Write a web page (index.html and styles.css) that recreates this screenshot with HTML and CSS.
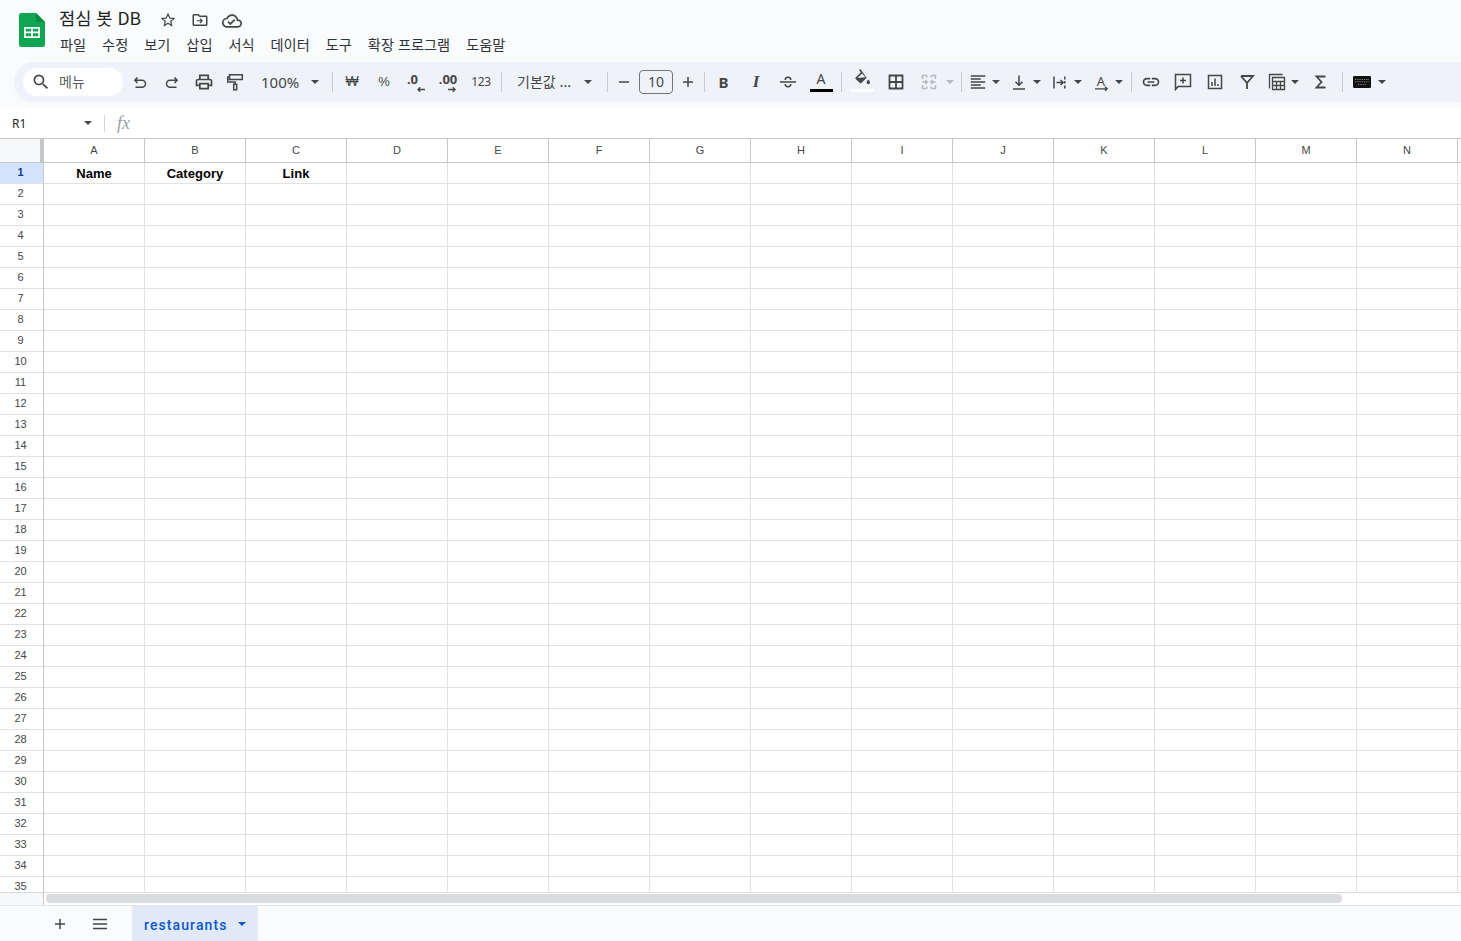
FILE: index.html
```html
<!DOCTYPE html>
<html lang="ko">
<head>
<meta charset="utf-8">
<title>점심 봇 DB</title>
<link rel="stylesheet" href="styles.css">
</head>
<body>
<div class="app">
  <header class="header">
    <div class="top">
      <svg class="logo" viewBox="0 0 26 34"><path fill="#0fa653" d="M2.5 0H17l9 9v22.5a2.5 2.5 0 0 1-2.5 2.5h-21A2.5 2.5 0 0 1 0 31.500V2.500A2.500 2.500 0 0 1 2.500 0z"/><path fill="#0a8a43" d="M17 0l9 9h-9z"/><path fill="#fff" d="M5 14h16v11H5zm1.800 1.800v2.800h5.300v-2.800zm7.100 0v2.800h5.300v-2.800zm-7.100 4.500v2.900h5.300v-2.900zm7.100 0v2.900h5.300v-2.900z" fill-rule="evenodd"/></svg>
      <div class="titles">
        <div class="title-row">
          <span class="doc-title">점심 봇 DB</span>
          <span class="title-icons">
            <span class="ti"><svg viewBox="0 0 24 24" class="i18"><path d="M22 9.240l-7.190-.620L12 2 9.190 8.630 2 9.240l5.460 4.730L5.820 21 12 17.270 18.180 21l-1.630-7.030L22 9.240zM12 15.400l-3.760 2.270 1-4.280-3.320-2.880 4.380-.380L12 6.100l1.710 4.040 4.380.380-3.320 2.880 1 4.280L12 15.400z"/></svg></span>
            <span class="ti"><svg viewBox="0 0 24 24" class="i18"><path d="M20 6h-8l-2-2H4c-1.100 0-2 .9-2 2v12c0 1.100.9 2 2 2h16c1.100 0 2-.9 2-2V8c0-1.100-.9-2-2-2zm0 12H4V6h5.170l2 2H20v10z"/><path d="M12.500 9.500l-1.100 1.100 1.600 1.600H7.500v1.600H13l-1.600 1.600 1.100 1.100 3.500-3.500z"/></svg></span>
            <span class="ti"><svg viewBox="0 0 24 24" class="i20"><path d="M19.350 10.040C18.670 6.590 15.640 4 12 4 9.110 4 6.600 5.640 5.350 8.040 2.340 8.360 0 10.910 0 14c0 3.310 2.690 6 6 6h13c2.760 0 5-2.240 5-5 0-2.640-2.050-4.780-4.650-4.960zM19 18H6c-2.210 0-4-1.790-4-4 0-2.050 1.530-3.760 3.560-3.970l1.070-.11.5-.95C8.080 7.140 9.940 6 12 6c2.620 0 4.880 1.860 5.390 4.430l.3 1.500 1.530.11c1.560.1 2.780 1.410 2.780 2.960 0 1.650-1.350 3-3 3zm-9-3.820l-2.090-2.090L6.500 13.500 10 17l6.010-6.010-1.410-1.410z"/></svg></span>
          </span>
        </div>
        <nav class="menu">
          <span>파일</span><span>수정</span><span>보기</span><span>삽입</span><span>서식</span><span>데이터</span><span>도구</span><span>확장 프로그램</span><span>도움말</span>
        </nav>
      </div>
    </div>
    <div class="toolbar">
      <div class="search"><svg viewBox="0 0 24 24" class="i20"><path d="M15.500 14h-.79l-.28-.27A6.471 6.471 0 0 0 16 9.500 6.500 6.500 0 1 0 9.500 16c1.610 0 3.090-.59 4.230-1.570l.27.28v.79l5 4.990L20.490 19l-4.990-5zm-6 0C7.010 14 5 11.990 5 9.500S7.010 5 9.500 5 14 7.010 14 9.500 11.990 14 9.500 14z"/></svg><span>메뉴</span></div>
      <span class="btn first"><svg viewBox="0 0 18 18" class="i18 st"><path d="M6.500 4.500L3.800 7.300l2.700 2.700M3.800 7.300h7.200a3.500 3.500 0 0 1 0 7H4.500"/></svg></span>
      <span class="btn"><svg viewBox="0 0 18 18" class="i18 st"><path d="M11.500 4.500l2.700 2.800-2.700 2.700M14.200 7.300H7a3.500 3.500 0 0 0 0 7h6.500"/></svg></span>
      <span class="btn"><svg viewBox="0 0 24 24" class="i20"><path d="M19 8h-1V3H6v5H5c-1.660 0-3 1.340-3 3v6h4v4h12v-4h4v-6c0-1.660-1.340-3-3-3zM8 5h8v3H8V5zm8 12v2H8v-4h8v2zm2-2v-2H6v2H4v-4c0-.55.45-1 1-1h14c.55 0 1 .45 1 1v4h-2z"/></svg></span>
      <span class="btn"><svg viewBox="0 0 18 18" class="i18 st"><path d="M2.500 1.800h12.800v4.700H2.500zM2.500 4H.8v5h7.400v2.300M6.700 11.300h3v5.500h-3z"/></svg></span>
      <span class="zoom"><span>100%</span><i class="caret"></i></span>
      <i class="sep"></i>
      <span class="btn txt won">₩</span>
      <span class="btn txt pct">%</span>
      <span class="btn dec dec-l"><b>.0</b><svg viewBox="0 0 8 5" class="dec-arrow"><path d="M8 2.500H1M3.300 .3L1 2.500l2.300 2.200"/></svg></span>
      <span class="btn dec dec-r"><b>.00</b><svg viewBox="0 0 8 5" class="dec-arrow"><path d="M0 2.500h7M4.700 .3L7 2.500 4.700 4.700"/></svg></span>
      <span class="btn txt num">123</span>
      <i class="sep"></i>
      <span class="font-sel"><span>기본값 ...</span><i class="caret"></i></span>
      <i class="sep"></i>
      <span class="step"><svg viewBox="0 0 12 12" class="i12 st"><path d="M1 6h10"/></svg></span>
      <span class="size"><span>10</span></span>
      <span class="step plus"><svg viewBox="0 0 12 12" class="i12 st"><path d="M1 6h10M6 1v10"/></svg></span>
      <i class="sep"></i>
      <span class="btn txt bold">B</span>
      <span class="btn txt ital">I</span>
      <span class="btn"><svg viewBox="0 0 18 18" class="i18 st"><path d="M1 9h16M6.200 7c0-1.600 1.100-2.700 2.800-2.700s2.800 1.100 2.800 2.700M6.200 11c0 1.600 1.100 2.700 2.800 2.700s2.800-1.100 2.800-2.700"/></svg></span>
      <span class="btn color"><span class="color-a">A</span><i class="bar black"></i></span>
      <i class="sep"></i>
      <span class="btn fill"><svg viewBox="0 0 18 18" class="i18 fillicon"><path d="M7.300 0L6 1.300l1.900 1.900L2.700 8.400a1.100 1.100 0 0 0 0 1.500l4.200 4.200a1.100 1.100 0 0 0 1.500 0l5.300-5.300zM4.500 9.100l4.500-4.500 3.600 3.600z"/><path d="M15.300 10.500s-1.700 1.900-1.700 3a1.700 1.700 0 0 0 3.400 0c0-1.100-1.700-3-1.700-3z"/></svg><i class="bar white"></i></span>
      <span class="btn gap2"><svg viewBox="0 0 18 18" class="i18 st heavy"><path d="M2.500 2.500h13v13h-13zM9 2.500v13M2.500 9h13"/></svg></span>
      <span class="merge"><svg viewBox="0 0 18 18" class="i18 st dis"><path d="M2.500 6V2.500h4M11.500 2.500h4V6M2.500 12v3.500h4M11.500 15.500h4V12M2.500 9H7M5.200 7L7.200 9l-2 2M15.500 9H11M12.800 7l-2 2 2 2M6.800 2.500v2M11.200 2.500v2M6.800 13.500v2M11.200 13.500v2"/></svg></span>
      <i class="caret dis-caret"></i>
      <i class="sep"></i>
      <span class="dd"><svg viewBox="0 0 18 18" class="i18 st"><path d="M1.800 3h14.400M1.800 6h10M1.800 9h14.400M1.800 12h10M1.800 15h14.400"/></svg><i class="caret"></i></span>
      <span class="dd"><svg viewBox="0 0 18 18" class="i18 st"><path d="M9 2.500v9.500M5.500 8.800L9 12.300l3.500-3.500M3 16h12"/></svg><i class="caret"></i></span>
      <span class="dd"><svg viewBox="0 0 18 18" class="i18 st"><path d="M3 3.500v12M13.800 3.500v3M13.800 8v2.500M13.800 12.500v3M5.500 9.500h6.500M9.500 7l2.700 2.500L9.500 12"/></svg><i class="caret"></i></span>
      <span class="dd last"><svg viewBox="0 0 18 18" class="i18 rot"><text x="9" y="13" class="rot-a">A</text><path class="rot-line" d="M3 15.800h12M13 13.800l2.200 2-2.200 2"/></svg><i class="caret"></i></span>
      <i class="sep"></i>
      <span class="btn"><svg viewBox="0 0 24 24" class="i20"><path d="M3.900 12c0-1.710 1.390-3.100 3.100-3.100h4V7H7c-2.760 0-5 2.240-5 5s2.240 5 5 5h4v-1.900H7c-1.710 0-3.100-1.390-3.100-3.100zM8 13h8v-2H8v2zm9-6h-4v1.900h4c1.710 0 3.100 1.390 3.100 3.100s-1.390 3.100-3.100 3.100h-4V17h4c2.760 0 5-2.240 5-5s-2.240-5-5-5z"/></svg></span>
      <span class="btn"><svg viewBox="0 0 18 18" class="i18 st"><path d="M1.500 1.500h15v12H4l-2.500 3zM9 4.500v6M6 7.500h6"/></svg></span>
      <span class="btn"><svg viewBox="0 0 18 18" class="i18 st"><path d="M2.500 2.500h13v13h-13zM6 13V9M9 13V5.500M12 13v-2"/></svg></span>
      <span class="btn"><svg viewBox="0 0 18 18" class="i18 st heavy"><path d="M3 3h12L9 10v6M9 10L3 3"/></svg></span>
      <span class="dd tbl"><svg viewBox="0 0 18 18" class="i18 st thin"><path d="M1.500 15.500V1.500h13M4.500 4.500h12v12h-12zM4.500 8.500h12M4.500 12.500h12M8.500 8.500v8M12.500 8.500v8"/></svg><i class="caret"></i></span>
      <span class="btn sig"><svg viewBox="0 0 18 18" class="i18 st heavy"><path d="M13.500 3.500h-9L9.500 9l-5 5.500h9"/></svg></span>
      <i class="sep"></i>
      <span class="dd kbd"><svg viewBox="0 0 18 12" class="kbd-ic"><path fill="#111" d="M0 1.200A1.200 1.200 0 0 1 1.200 0h15.600A1.200 1.200 0 0 1 18 1.200v9.600a1.200 1.200 0 0 1-1.200 1.200H1.200A1.200 1.200 0 0 1 0 10.800z"/><path stroke="#9aa0a6" stroke-width=".8" stroke-dasharray="1 .8" fill="none" d="M2 3.500h14M2 5.800h14M5 8.500h8"/></svg><i class="caret"></i></span>
    </div>
  </header>

  <div class="formula">
    <span class="ref">R1</span><i class="caret"></i><i class="fsep"></i><span class="fx">fx</span>
  </div>

  <div class="sheet">
    <div class="colhead">
      <div class="corner"></div>
      <div class="ch">A</div><div class="ch">B</div><div class="ch">C</div><div class="ch">D</div><div class="ch">E</div><div class="ch">F</div><div class="ch">G</div><div class="ch">H</div><div class="ch">I</div><div class="ch">J</div><div class="ch">K</div><div class="ch">L</div><div class="ch">M</div><div class="ch">N</div>
    </div>
    <div class="sheet-body">
      <div class="rows">
        <div class="rn on">1</div><div class="rn">2</div><div class="rn">3</div><div class="rn">4</div><div class="rn">5</div><div class="rn">6</div><div class="rn">7</div><div class="rn">8</div><div class="rn">9</div><div class="rn">10</div><div class="rn">11</div><div class="rn">12</div><div class="rn">13</div><div class="rn">14</div><div class="rn">15</div><div class="rn">16</div><div class="rn">17</div><div class="rn">18</div><div class="rn">19</div><div class="rn">20</div><div class="rn">21</div><div class="rn">22</div><div class="rn">23</div><div class="rn">24</div><div class="rn">25</div><div class="rn">26</div><div class="rn">27</div><div class="rn">28</div><div class="rn">29</div><div class="rn">30</div><div class="rn">31</div><div class="rn">32</div><div class="rn">33</div><div class="rn">34</div><div class="rn">35</div>
      </div>
      <div class="cells">
        <div class="row1"><div class="cell">Name</div><div class="cell">Category</div><div class="cell">Link</div></div>
      </div>
    </div>
  </div>

  <div class="hscroll"><div class="hs-left"></div><div class="hs-track"><div class="hs-thumb"></div></div></div>

  <footer class="tabs">
    <span class="tab-ic"><svg viewBox="0 0 12 12" class="i12 st"><path d="M1 6h10M6 1v10"/></svg></span>
    <span class="tab-ic"><svg viewBox="0 0 16 12" class="burger st"><path d="M1 1.500h14M1 6h14M1 10.500h14"/></svg></span>
    <div class="tab"><span>restaurants</span><i class="caret blue"></i></div>
  </footer>
</div>
</body>
</html>
```
FILE: styles.css
```css
* { box-sizing: border-box; }
html, body { margin: 0; height: 100%; overflow: hidden; background: #fff; }
body { font-family: "Liberation Sans", "Noto Sans CJK KR", sans-serif; color: #1f1f1f; }
i { font-style: normal; display: block; flex: none; }
svg { display: block; flex: none; fill: #444746; }
.i12 { width: 12px; height: 12px; }
.i16 { width: 16px; height: 16px; }
.i18 { width: 18px; height: 18px; }
.i20 { width: 20px; height: 20px; }
.st { fill: none; stroke: #444746; stroke-width: 1.500; }
.st.heavy { stroke-width: 1.800; }
.st.thin { stroke-width: 1.300; }
.st.dis { stroke: #b4b8bc; }

.app { width: 1461px; height: 941px; display: flex; flex-direction: column; overflow: hidden; }

.header { height: 108px; background: #f9fbfd; flex: none; padding-top: 4px; }
.top { display: flex; height: 58px; padding-left: 19px; }
.logo { width: 26px; height: 34px; margin-top: 9px; }
.titles { margin-left: 14px; }
.title-row { display: flex; align-items: center; height: 27px; }
.doc-title { font: 17.600px/27px "Noto Sans CJK KR", sans-serif; color: #1f1f1f; width: 82px; white-space: nowrap; }
.title-icons { display: flex; margin-left: 11px; margin-top: 7px; }
.ti { width: 32px; display: flex; justify-content: center; }
.menu { display: flex; gap: 16px; margin-top: 2px; font: 14.200px/22px "Noto Sans CJK KR", sans-serif; color: #303336; padding-left: 1px; }

.toolbar { height: 40px; margin-left: 14px; display: flex; align-items: center; background: #eff3f9; border-radius: 20px 0 0 20px; box-shadow: 0 3px 4px -1px #f5f7fa; }
.search { width: 100px; height: 28px; margin-left: 9px; background: #fff; border-radius: 14px; display: flex; align-items: center; padding-left: 8px; gap: 8px; font: 14px "Noto Sans CJK KR", sans-serif; color: #5b5f63; }
.search span { margin-bottom: 3px; }
.btn { width: 32px; height: 32px; display: flex; flex-direction: column; align-items: center; justify-content: center; color: #444746; position: relative; }
.btn.first { margin-left: 1px; }
.caret { width: 0; height: 0; border-left: 4px solid transparent; border-right: 4px solid transparent; border-top: 4px solid #444746; }
.zoom { width: 75px; padding-left: 9px; display: flex; align-items: center; font: 15px "Noto Sans", sans-serif; color: #444746; gap: 12px; }
.sep { width: 1px; height: 20px; margin: 0 3px 0 5px; background: #c7cacd; }
.txt { font-family: "Noto Sans", sans-serif; }
.won { font: 14px "Liberation Sans", sans-serif; padding-bottom: 2px; }
.pct { font: 13px "Liberation Sans", sans-serif; padding-bottom: 2px; }
.num { font-size: 12px; letter-spacing: -.3px; padding-left: 2px; padding-bottom: 1px; }
.dec { padding-top: 1px; }
.dec b { font: 700 13px/13px "Noto Sans", sans-serif; }
.dec-arrow { width: 8px; height: 5px; fill: none; stroke: #444746; stroke-width: 1.400; margin-top: 1px; }
.dec-l b { margin-right: 7px; }
.dec-l .dec-arrow { margin-left: 9px; }
.dec-r .dec-arrow { margin-left: 7px; }
.font-sel { width: 97px; padding-left: 12px; display: flex; align-items: center; gap: 12px; font: 14px "Noto Sans CJK KR", sans-serif; color: #444746; white-space: nowrap; }
.font-sel span { width: 55px; margin-bottom: 2px; }
.step { width: 26px; display: flex; justify-content: center; }
.step.plus { width: 24px; margin-left: 2px; padding-left: 2px; }
.size { width: 34px; height: 24px; margin-left: 2px; border: 1px solid #747775; border-radius: 4px; display: flex; align-items: center; justify-content: center; font: 14px "Noto Sans", sans-serif; color: #444746; }
.size span { margin-bottom: 2px; }
.bold { font: 700 15px "Noto Sans", sans-serif; padding-right: 1px; }
.ital { font: italic 700 17px "Liberation Serif", serif; }
.color-a { font: 14px/14px "Noto Sans", sans-serif; margin-top: -6px; margin-left: 2px; }
.bar { position: absolute; left: 6px; width: 23px; height: 3px; top: 23px; }
.bar.black { background: #000; }
.bar.white { background: #fff; left: 6px; }
.fill { width: 33px; }
.fillicon { margin-top: -8px; }
.gap2 { margin-left: 2px; }
.merge { width: 34px; display: flex; justify-content: center; }
.dis-caret { border-top-color: #b4b8bc; margin-right: 2px; margin-left: 0; }
.dd { width: 41px; padding-left: 4px; display: flex; align-items: center; gap: 5px; }
.dd.last { width: 38px; }
.dd.tbl { width: 40px; padding-left: 5px; }
.sig { margin-left: 2px; }
.dd.kbd { padding-left: 7px; gap: 7px; width: 48px; }
.kbd-ic { width: 18px; height: 12px; fill: none; }
.rot { overflow: visible; }
.rot-a { font: 13px "Noto Sans", sans-serif; text-anchor: middle; fill: #444746; }
.rot-line { fill: none; stroke: #444746; stroke-width: 1.300; }

.formula { height: 30px; flex: none; background: #fff; display: flex; align-items: center; padding-left: 12px; font-size: 12px; color: #1f1f1f; }
.ref { width: 72px; font: 12px "Noto Sans", sans-serif; }
.fsep { width: 1px; height: 17px; margin-left: 12px; background: #d3d5d7; }
.fx { margin-left: 12px; font: italic 18px "Liberation Serif", serif; color: #9aa0a6; }

.sheet { flex: none; height: 755px; overflow: hidden; border-top: 1px solid #c4c7c5; border-bottom: 1px solid #d9dbdd; display: flex; flex-direction: column; }
.colhead { display: flex; height: 24px; flex: none; border-bottom: 1px solid #c4c7c5; }
.corner { width: 44px; flex: none; background: #f8f9fa; border-right: 4px solid #c4c7c5; }
.ch { width: 101px; flex: none; border-right: 1px solid #c4c7c5; font-size: 11px; line-height: 22px; text-align: center; color: #444746; }
.sheet-body { display: flex; flex: 1; min-height: 0; }
.rows { width: 44px; flex: none; border-right: 1px solid #c4c7c5; }
.rn { height: 21px; border-bottom: 1px solid #e1e1e1; font-size: 11px; line-height: 19px; text-align: center; padding-right: 2px; color: #444746; }
.rn.on { background: #d3e3fd; font-weight: 700; color: #0b3f8a; }
.cells { flex: 1; background-image: repeating-linear-gradient(to right, transparent 0 100px, #e1e1e1 100px 101px), repeating-linear-gradient(to bottom, transparent 0 20px, #e1e1e1 20px 21px); }
.row1 { display: flex; }
.cell { width: 101px; height: 20px; font-size: 13px; line-height: 21px; font-weight: 700; text-align: center; color: #000; letter-spacing: .05px; padding-right: 1px; }

.hscroll { height: 13px; flex: none; display: flex; border-bottom: 1px solid #e3e5e7; }
.hs-left { width: 44px; flex: none; background: #f8f9fa; border-right: 1px solid #c4c7c5; }
.hs-track { flex: 1; padding: 1px 0 0 2px; }
.hs-thumb { width: 1296px; height: 9px; background: #dadce0; border-radius: 4px; }

.tabs { flex: 1; background: #f9fbfd; display: flex; align-items: stretch; padding-left: 40px; }
.tab-ic { width: 40px; display: flex; align-items: center; justify-content: center; }
.burger { width: 16px; height: 12px; }
.tab { width: 126px; margin-left: 12px; background: #e1e9f7; display: flex; align-items: center; padding-left: 12px; gap: 10px; font: 500 14px "Roboto", sans-serif; letter-spacing: 1.100px; color: #0b57d0; }
.tab span { width: 84px; white-space: nowrap; padding-top: 2px; }
.caret.blue { border-top-color: #0b57d0; }
```
